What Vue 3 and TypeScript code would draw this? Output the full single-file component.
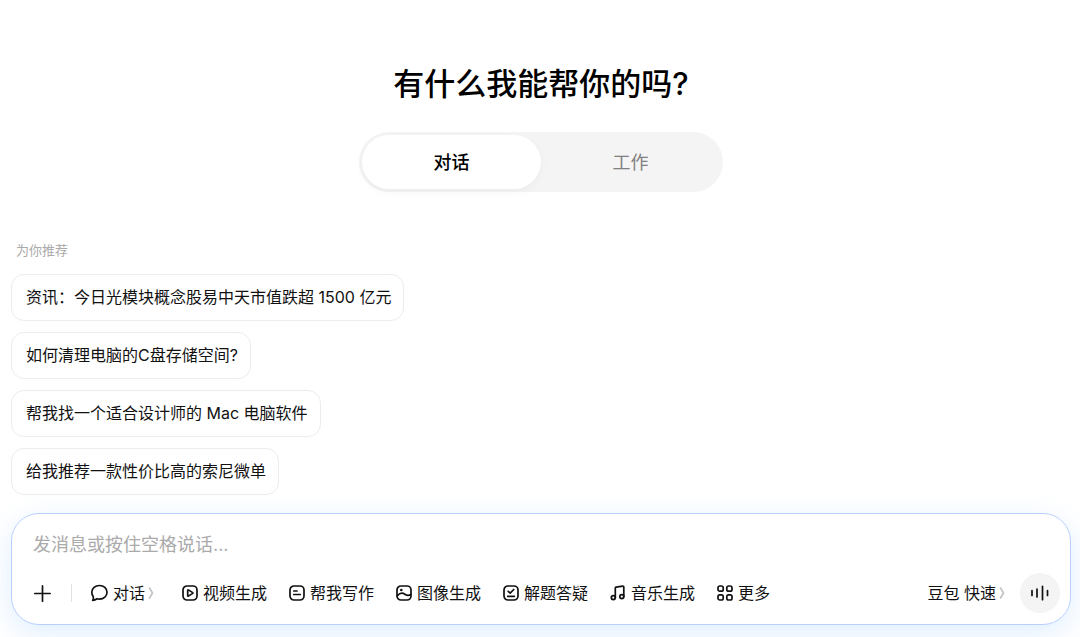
<script setup lang="ts">
import { ref } from 'vue'

type Mode = 'chat' | 'work'
type IconName = 'video' | 'write' | 'image' | 'solve' | 'music' | 'more'

const mode = ref<Mode>('chat')
const message = ref('')

const modes: { id: Mode; label: string }[] = [
  { id: 'chat', label: '对话' },
  { id: 'work', label: '工作' },
]

const suggestions: string[] = [
  '资讯：今日光模块概念股易中天市值跌超 1500 亿元',
  '如何清理电脑的C盘存储空间?',
  '帮我找一个适合设计师的 Mac 电脑软件',
  '给我推荐一款性价比高的索尼微单',
]

const skills: { icon: IconName; label: string }[] = [
  { icon: 'video', label: '视频生成' },
  { icon: 'write', label: '帮我写作' },
  { icon: 'image', label: '图像生成' },
  { icon: 'solve', label: '解题答疑' },
  { icon: 'music', label: '音乐生成' },
  { icon: 'more', label: '更多' },
]
</script>

<template>
  <main class="page">
    <h1 class="title">有什么我能帮你的吗?</h1>

    <div class="switch" role="tablist">
      <button
        v-for="item in modes"
        :key="item.id"
        type="button"
        role="tab"
        class="switch-item"
        :class="{ active: mode === item.id }"
        :aria-selected="mode === item.id"
        @click="mode = item.id"
      >{{ item.label }}</button>
    </div>

    <section class="recommend">
      <h2 class="recommend-title">为你推荐</h2>
      <button
        v-for="text in suggestions"
        :key="text"
        type="button"
        class="chip"
        @click="message = text"
      >{{ text }}</button>
    </section>

    <form class="composer" @submit.prevent>
      <input v-model="message" class="message" type="text" aria-label="消息" placeholder="发消息或按住空格说话..." />
      <div class="toolbar">
        <button type="button" class="add" aria-label="添加">
          <svg width="18" height="18" viewBox="0 0 18 18"><path d="M9.500 1.800v15.400M1.800 9.500h15.400" /></svg>
        </button>
        <span class="divider"></span>
        <button type="button" class="tool chat">
          <svg width="18" height="18" viewBox="0 0 18 18">
            <path d="M9.500 1.500c4.300 0 7.500 2.900 7.500 6.800s-3.200 6.900-7.500 6.900c-.9 0-1.700-.1-2.400-.4-1.300.9-2.700 1.500-4.400 1.700.7-1.300.9-2.500.6-3.700A6.700 6.700 0 0 1 1.800 8.300c0-3.900 3.400-6.800 7.700-6.800Z" />
          </svg>
          <span>对话</span>
          <svg class="chevron" width="6" height="12" viewBox="0 0 6 12"><path d="M1.500 1 4.500 6l-3 5" /></svg>
        </button>

        <button v-for="skill in skills" :key="skill.label" type="button" class="tool">
          <svg width="16" height="16" viewBox="0 0 16 16">
            <template v-if="skill.icon === 'video'">
              <rect x="1" y="1" width="14" height="14" rx="4" />
              <path d="M5.700 5.300v5.400c0 .4.400.6.700.4l4.300-2.700a.5.5 0 0 0 0-.8L6.400 4.900c-.3-.2-.7 0-.7.4Z" />
            </template>
            <template v-else-if="skill.icon === 'write'">
              <rect x="1" y="1" width="14" height="14" rx="4" />
              <path d="M4.800 6h3.200M4.800 9.500h6.400" />
            </template>
            <template v-else-if="skill.icon === 'image'">
              <rect x="1" y="1" width="14" height="14" rx="4" />
              <path d="M1.200 10.800C4.500 7.300 6.700 7.700 8.800 9.200s3.900 1.900 6 .3" />
              <circle class="solid" cx="5.300" cy="5" r="1.300" />
            </template>
            <template v-else-if="skill.icon === 'solve'">
              <rect x="1" y="1" width="14" height="14" rx="4" />
              <path d="m5.200 6.300 2 1.800 3.500-3.600M4.700 11.300h6.600" />
            </template>
            <template v-else-if="skill.icon === 'music'">
              <path d="M5.300 12.600V3.200c0-.5.300-.9.800-1l6.600-1.100c.6-.1 1.100.3 1.100.9v9.600" />
              <circle cx="3.300" cy="12.600" r="2" />
              <circle cx="11.800" cy="11.600" r="2" />
            </template>
            <template v-else>
              <rect x="1" y="1" width="5.200" height="5.200" rx="1.800" />
              <rect x="9.800" y="1" width="5.200" height="5.200" rx="1.800" />
              <rect x="1" y="9.800" width="5.200" height="5.200" rx="1.800" />
              <rect x="9.800" y="9.800" width="5.200" height="5.200" rx="1.800" />
            </template>
          </svg>
          <span>{{ skill.label }}</span>
        </button>

        <button type="button" class="tool model">
          <span>豆包 快速</span>
          <svg class="chevron" width="6" height="12" viewBox="0 0 6 12"><path d="M1.500 1 4.500 6l-3 5" /></svg>
        </button>
        <button type="button" class="voice" aria-label="语音输入">
          <svg width="20" height="16" viewBox="0 0 20 16"><path d="M2 5.500v5M7 4v8M12.500 1.300v13.400M17.500 5.500v5" /></svg>
        </button>
      </div>
    </form>
  </main>
</template>

<style>
body {
  margin: 0;
  background: #fff;
}
</style>

<style scoped>
.page {
  box-sizing: border-box;
  min-height: 100vh;
  padding: 60px 9px 12px 11px;
  display: flex;
  flex-direction: column;
  font-family: Inter, "Noto Sans CJK SC", sans-serif;
  font-size: 16px;
  color: #111;
}

button,
input {
  margin: 0;
  padding: 0;
  border: 0;
  background: none;
  font: inherit;
  color: inherit;
}

button {
  cursor: pointer;
}

svg {
  display: block;
  flex: none;
  fill: none;
  stroke: currentColor;
  stroke-width: 1.7;
  stroke-linecap: round;
  stroke-linejoin: round;
}

.solid {
  fill: currentColor;
  stroke: none;
}

.title {
  margin: 0 0 24px;
  text-align: center;
  font-size: 31px;
  line-height: 48px;
  font-weight: 500;
  color: #000;
}

.switch {
  box-sizing: border-box;
  align-self: center;
  width: 364px;
  max-width: 100%;
  padding: 3px;
  display: flex;
  border-radius: 30px;
  background: #f4f4f4;
}

.switch-item {
  flex: 1;
  height: 54px;
  padding-bottom: 2px;
  border-radius: 27px;
  font-size: 18px;
  color: #808080;
}

.switch-item.active {
  background: #fff;
  color: #000;
  font-weight: 500;
  box-shadow: 0 3px 8px rgba(0, 0, 0, 0.04);
}

.recommend {
  margin-top: 48px;
  display: flex;
  flex-direction: column;
  align-items: flex-start;
  gap: 11px;
}

.recommend-title {
  margin: 0 0 2px 5px;
  font-size: 13px;
  line-height: 21px;
  font-weight: 400;
  color: #aaa;
}

.chip {
  box-sizing: border-box;
  min-height: 47px;
  padding: 9px 12px 11px 14px;
  border: 1px solid #ececec;
  border-radius: 13px;
  background: #fff;
  line-height: 24px;
  text-align: left;
}

.composer {
  margin-top: 18px;
  padding: 15px 10px 11px 21px;
  border: 1px solid #b9d0ff;
  border-radius: 28px;
  background: #fff;
  box-shadow: 0 8px 28px rgba(80, 160, 255, 0.18);
}

.message {
  display: block;
  width: 100%;
  height: 30px;
  outline: 0;
  font-size: 18px;
}

.message::placeholder {
  color: #aaa;
  opacity: 1;
}

.toolbar {
  margin-top: 14px;
  display: flex;
  align-items: center;
}

.divider {
  width: 1px;
  height: 18px;
  margin: 0 18px 0 20px;
  background: #e2e2e2;
}

.tool {
  display: flex;
  align-items: center;
  gap: 5px;
  margin-right: 22px;
  line-height: 24px;
  white-space: nowrap;
}

.tool.chat {
  margin-right: 28px;
}

.tool .chevron {
  margin-left: -2px;
  color: #c4c4c4;
}

.tool.model {
  margin-left: auto;
  margin-right: 15px;
}

.voice {
  flex: none;
  width: 40px;
  height: 40px;
  display: grid;
  place-items: center;
  border-radius: 50%;
  background: #f4f4f4;
}
</style>
